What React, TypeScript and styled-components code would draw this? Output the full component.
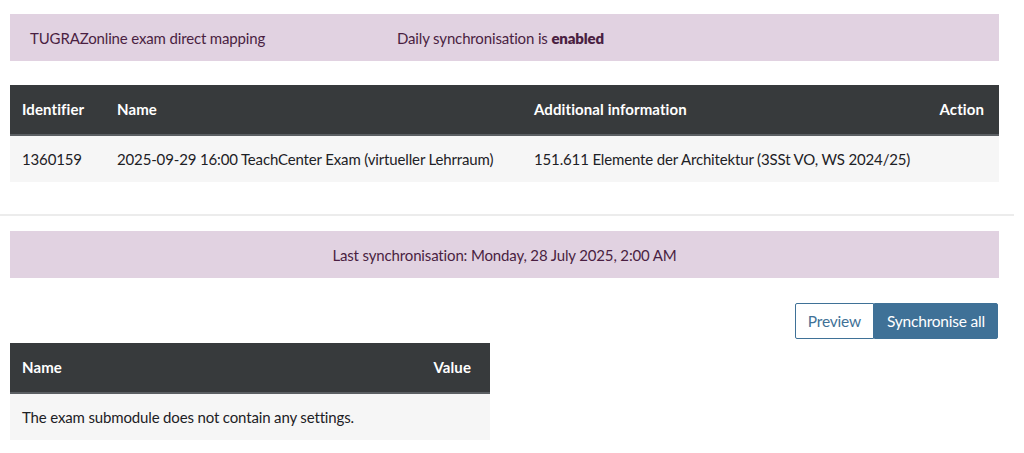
import React from "react"
import styled, { createGlobalStyle } from "styled-components"

const GlobalStyle = createGlobalStyle`
  html, body {
    margin: 0;
    padding: 0;
    background: #fff;
  }
  body {
    font-family: Lato, "Noto Sans", sans-serif;
    font-size: 15px;
    letter-spacing: -0.15px;
    color: #1d2125;
  }
`

const Page = styled.div`
  display: flex;
  flex-direction: column;
  padding: 14px 25px 0 10px;
`

const Alert = styled.div<{ $center?: boolean }>`
  display: flex;
  justify-content: ${(p) => (p.$center ? "center" : "flex-start")};
  align-items: center;
  height: 47px;
  padding: 0 20px;
  box-sizing: border-box;
  background: #e1d2e1;
  color: #4a1f42;
  line-height: 22px;
`

const AlertCell = styled.span<{ $width?: number }>`
  width: ${(p) => (p.$width ? `${p.$width}px` : "auto")};
  b {
    font-weight: 800;
  }
`

const Table = styled.table<{ $width?: number }>`
  width: ${(p) => (p.$width ? `${p.$width}px` : "100%")};
  border-collapse: collapse;
  table-layout: fixed;
`

const HeadCell = styled.th<{ $width?: number; $right?: boolean; $padRight?: number }>`
  width: ${(p) => (p.$width ? `${p.$width}px` : "auto")};
  text-align: ${(p) => (p.$right ? "right" : "left")};
  background: #373a3c;
  color: #fff;
  font-weight: 700;
  letter-spacing: 0.1px;
  height: 50px;
  padding: 0 ${(p) => p.$padRight ?? 12}px 1px 12px;
  box-sizing: border-box;
  border-bottom: 2px solid #5b5f63;
`

const Cell = styled.td`
  background: #f6f6f6;
  height: 47px;
  padding: 0 12px;
  box-sizing: border-box;
  white-space: nowrap;
`

const Divider = styled.hr`
  margin: 32px -15px 15px -10px;
  border: 0;
  border-top: 2px solid #ececec;
`

const Actions = styled.div`
  display: flex;
  justify-content: flex-end;
  margin: 25px 1px 4px 0;
`

const Button = styled.button<{ $primary?: boolean }>`
  height: 36px;
  padding: 0 12px;
  font-family: inherit;
  font-size: 15.5px;
  letter-spacing: -0.2px;
  border: 1px solid #3f7197;
  background: ${(p) => (p.$primary ? "#3f7197" : "#fff")};
  color: ${(p) => (p.$primary ? "#fff" : "#3f7197")};
  border-radius: ${(p) => (p.$primary ? "0 2px 2px 0" : "2px 0 0 2px")};
`

const Spacer = styled.div`
  height: 24px;
`

export default function App() {
  return (
    <>
      <GlobalStyle />
      <Page>
        <Alert>
          <AlertCell $width={367}>TUGRAZonline exam direct mapping</AlertCell>
          <AlertCell>
            Daily synchronisation is <b>enabled</b>
          </AlertCell>
        </Alert>
        <Spacer />
        <Table>
          <thead>
            <tr>
              <HeadCell $width={95}>Identifier</HeadCell>
              <HeadCell $width={417}>Name</HeadCell>
              <HeadCell>Additional information</HeadCell>
              <HeadCell $width={90} $right $padRight={15}>
                Action
              </HeadCell>
            </tr>
          </thead>
          <tbody>
            <tr>
              <Cell>1360159</Cell>
              <Cell>2025-09-29 16:00 TeachCenter Exam (virtueller Lehrraum)</Cell>
              <Cell>151.611 Elemente der Architektur (3SSt VO, WS 2024/25)</Cell>
              <Cell />
            </tr>
          </tbody>
        </Table>
        <Divider />
        <Alert $center>
          <AlertCell>Last synchronisation: Monday, 28 July 2025, 2:00 AM</AlertCell>
        </Alert>
        <Actions>
          <Button>Preview</Button>
          <Button $primary>Synchronise all</Button>
        </Actions>
        <Table $width={480}>
          <thead>
            <tr>
              <HeadCell>Name</HeadCell>
              <HeadCell $right $padRight={19}>
                Value
              </HeadCell>
            </tr>
          </thead>
          <tbody>
            <tr>
              <Cell colSpan={2}>The exam submodule does not contain any settings.</Cell>
            </tr>
          </tbody>
        </Table>
      </Page>
    </>
  )
}
